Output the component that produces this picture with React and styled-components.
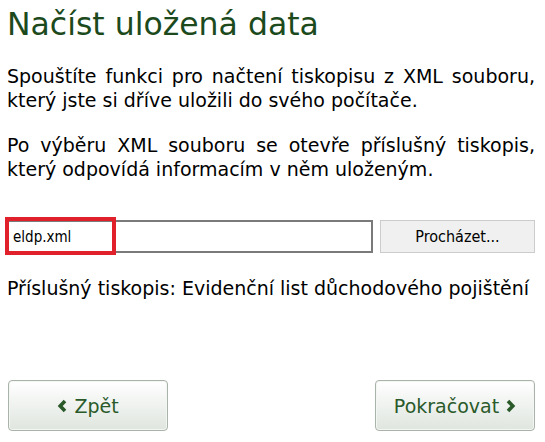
import React from "react";
import styled, { createGlobalStyle } from "styled-components";

const GlobalStyle = createGlobalStyle`
  html, body {
    margin: 0;
    padding: 0;
    background: #fff;
  }
  body {
    font-family: "DejaVu Sans", Verdana, sans-serif;
  }
`;

const Page = styled.div`
  width: 545px;
  height: 442px;
  box-sizing: border-box;
  padding: 0 10px 11px 7px;
  display: flex;
  flex-direction: column;
`;

const Title = styled.h1`
  margin: 4px 0 0 0;
  font-size: 31.5px;
  font-weight: normal;
  line-height: 40px;
  color: #1c4a1c;
`;

const Text = styled.p`
  margin: ${(p) => (p.$first ? "20px" : "21px")} 0 0 0;
  font-size: 19px;
  line-height: 24px;
  color: #000;
  text-align: justify;
`;

const FileRow = styled.div`
  display: flex;
  gap: 7px;
  margin-top: 39px;
  margin-left: -1px;
`;

const FileBox = styled.div`
  position: relative;
  flex: 1;
  height: 33px;
  box-sizing: border-box;
  border: 2px solid #7a7a7a;
  display: flex;
  align-items: center;
  padding-left: 5px;
  font-family: "DejaVu Sans Condensed", "DejaVu Sans", sans-serif;
  font-size: 15px;
  color: #000;
`;

const Highlight = styled.div`
  position: absolute;
  left: -3px;
  top: -5px;
  width: 111px;
  height: 38px;
  box-sizing: border-box;
  border: 4px solid #e0202a;
`;

const Browse = styled.button`
  width: 155px;
  height: 33px;
  background: #f0f0f0;
  border: 1px solid #cccccc;
  font-family: "DejaVu Sans Condensed", "DejaVu Sans", sans-serif;
  font-size: 16px;
  color: #000;
`;

const Note = styled.div`
  margin-top: 23px;
  font-size: 19px;
  line-height: 24px;
`;

const Footer = styled.div`
  margin-top: auto;
  display: flex;
  justify-content: space-between;
  padding-left: 1px;
`;

const NavButton = styled.button`
  width: 160px;
  height: 51px;
  box-sizing: border-box;
  border: 1px solid #a9b3a9;
  border-radius: 4px;
  background: linear-gradient(#ffffff, #dfe5df);
  box-shadow: inset 0 0 0 1px #f4f6f4;
  color: #2a5a2a;
  font-family: inherit;
  font-size: 19px;
  display: flex;
  align-items: center;
  justify-content: center;
  gap: 6px;
`;

const Chevron = ({ dir }) => (
  <svg width="11" height="14" viewBox="0 0 11 14">
    <path
      d={dir === "left" ? "M8 2 L3.2 7 L8 12" : "M3 2 L7.8 7 L3 12"}
      fill="none"
      stroke="#2a5a2a"
      strokeWidth="3.6"
    />
  </svg>
);

export default function App() {
  return (
    <>
      <GlobalStyle />
      <Page>
        <Title>Načíst uložená data</Title>
        <Text $first>
          Spouštíte funkci pro načtení tiskopisu z XML souboru, který jste si dříve uložili do svého počítače.
        </Text>
        <Text>
          Po výběru XML souboru se otevře příslušný tiskopis, který odpovídá informacím v něm uloženým.
        </Text>
        <FileRow>
          <FileBox>
            <Highlight />
            eldp.xml
          </FileBox>
          <Browse>Procházet...</Browse>
        </FileRow>
        <Note>Příslušný tiskopis: Evidenční list důchodového pojištění</Note>
        <Footer>
          <NavButton>
            <Chevron dir="left" />
            Zpět
          </NavButton>
          <NavButton>
            Pokračovat
            <Chevron dir="right" />
          </NavButton>
        </Footer>
      </Page>
    </>
  );
}
